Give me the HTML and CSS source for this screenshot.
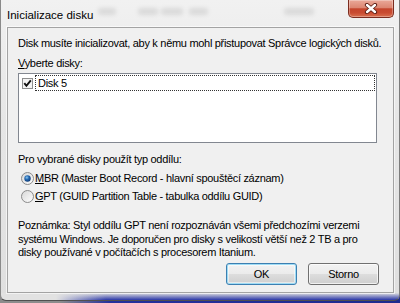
FILE: index.html
```html
<!DOCTYPE html>
<html lang="cs">
<head>
    <meta charset="UTF-8">
    <meta name="viewport" content="width=device-width, initial-scale=1.0">
    <title>Inicializace disku</title>
    <link rel="stylesheet" href="styles.css">
</head>
<body>
    <div class="window">
        <div class="titlebar">
            <span class="title">Inicializace disku</span>
            <div class="backdrop">
                <span class="blob b1"></span>
                <span class="blob b2"></span>
                <span class="blob b3"></span>
                <span class="blob b4"></span>
                <span class="blob b5"></span>
            </div>
            <div class="close">
                <svg width="14" height="11" viewBox="0 0 14 11">
                    <path d="M3 2 L11 9 M11 2 L3 9" stroke="#5a1c12" stroke-width="4.2" stroke-linecap="round"/>
                    <path d="M3 2 L11 9 M11 2 L3 9" stroke="#fff" stroke-width="2.4" stroke-linecap="round"/>
                </svg>
            </div>
        </div>

        <div class="client">
            <p class="intro">Disk musíte inicializovat, aby k němu mohl přistupovat Správce logických disků.</p>
            <div class="pick-label"><u>V</u>yberte disky:</div>

            <div class="listbox">
                <div class="item">
                    <span class="check">
                        <svg width="11" height="11" viewBox="0 0 11 11">
                            <rect x="0.5" y="0.5" width="10" height="10" fill="#f4f4f4" stroke="#8e8f8f"/>
                            <path d="M2.3 5.2 L4.4 7.8 L8.8 2.3" fill="none" stroke="#111" stroke-width="1.9"/>
                        </svg>
                    </span>
                    <span class="item-text">Disk 5</span>
                </div>
            </div>

            <div class="group-label">Pro vybrané disky použít typ oddílu:</div>
            <div class="radio first">
                <svg width="13" height="13" viewBox="0 0 13 13">
                    <defs>
                        <radialGradient id="dot" cx="0.4" cy="0.35" r="0.7">
                            <stop offset="0" stop-color="#8cc8ee"/>
                            <stop offset="0.45" stop-color="#2569b3"/>
                            <stop offset="1" stop-color="#0b3670"/>
                        </radialGradient>
                        <linearGradient id="ring" x1="0" y1="0" x2="1" y2="1">
                            <stop offset="0" stop-color="#d6d6d6"/>
                            <stop offset="1" stop-color="#ffffff"/>
                        </linearGradient>
                    </defs>
                    <circle cx="6.5" cy="6.5" r="6" fill="url(#ring)" stroke="#8a8a8a"/>
                    <circle cx="6.5" cy="6.5" r="3.2" fill="url(#dot)"/>
                </svg>
                <span><u>M</u>BR (Master Boot Record - hlavní spouštěcí záznam)</span>
            </div>
            <div class="radio">
                <svg width="13" height="13" viewBox="0 0 13 13">
                    <circle cx="6.5" cy="6.5" r="6" fill="url(#ring)" stroke="#8a8a8a"/>
                </svg>
                <span><u>G</u>PT (GUID Partition Table - tabulka oddílu GUID)</span>
            </div>

            <p class="note">Poznámka: Styl oddílu GPT není rozpoznáván všemi předchozími verzemi<br>systému Windows. Je doporučen pro disky s velikostí větší než 2 TB a pro<br>disky používané v počítačích s procesorem Itanium.</p>

            <div class="buttons">
                <button class="btn default">OK</button>
                <button class="btn">Storno</button>
            </div>
        </div>
    </div>
</body>
</html>
```

FILE: styles.css
```css
body {
    margin: 0;
    width: 400px;
    height: 303px;
    overflow: hidden;
    background: linear-gradient(to right, #8c8c8c 0, #8c8c8c 60px, #25309c 110px, #1e2a8e 100%);
    font-family: "Liberation Sans", Arial, sans-serif;
    font-size: 11px;
    letter-spacing: -0.3px;
    color: #000;
}
.window {
    height: 301px;
    box-sizing: border-box;
    border-left: 1px solid #8a8a8a;
    border-right: 1px solid #7c7c7c;
    border-bottom: 1px solid #505050;
    border-radius: 0 0 6px 6px;
    padding: 0 5px 7px 6px;
    display: flex;
    flex-direction: column;
    background:
        linear-gradient(to right, #e2e2e2 0, #e2e2e2 55px, rgba(226,226,226,0) 105px) 0 100% / 100% 7px no-repeat,
        linear-gradient(to bottom, rgba(42,54,168,0) 0, #2a36a8 100%) 0 100% / 100% 7px no-repeat,
        linear-gradient(#f1f1f1, #e6e6e6 40%, #dfdfdf);
}
.titlebar {
    height: 27px;
    display: flex;
    align-items: flex-start;
}
.title {
    margin-top: 8px;
    font-size: 11.5px;
    letter-spacing: 0;
    line-height: 15px;
    color: #000;
}
.backdrop {
    flex: 1;
    display: flex;
    margin-top: 8px;
}
.blob {
    height: 7px;
    border-radius: 3px;
    background: rgba(0,0,0,0.09);
    filter: blur(2px);
}
.b1 { margin-left: 5px; width: 18px; }
.b2 { margin-left: 22px; width: 20px; }
.b3 { margin-left: 3px; width: 22px; }
.b4 { margin-left: 6px; width: 19px; }
.b5 { margin-left: 76px; width: 30px; }
.close {
    width: 46px;
    height: 18px;
    box-sizing: border-box;
    border: 1px solid #7b2c1f;
    border-top: none;
    border-radius: 0 0 5px 5px;
    background: linear-gradient(#eaa999 0%, #dc8672 45%, #c4452c 52%, #c94b31 75%, #d9704f 100%);
    box-shadow: inset 0 0 0 1px rgba(255,255,255,0.3);
    display: flex;
    justify-content: center;
    align-items: center;
}
.client {
    flex: 1;
    border: 1px solid #a3a3a3;
    box-shadow: 0 0 0 1px rgba(255,255,255,0.6);
    background: #f0f0f0;
    padding: 8px 16px 0 10px;
}
.intro {
    margin: 0;
    line-height: 15px;
    white-space: nowrap;
}
.pick-label {
    margin-top: 5px;
    line-height: 15px;
}
.listbox {
    margin-top: 2px;
    height: 70px;
    box-sizing: border-box;
    border: 1px solid #828790;
    background: #fff;
    padding: 1px;
}
.item {
    display: flex;
    align-items: center;
    height: 16px;
}
.check {
    display: flex;
    margin-left: 2px;
}
.item-text {
    flex: 1;
    margin: 0 0 0 2px;
    height: 16px;
    box-sizing: border-box;
    border: 1px dotted #333;
    padding-left: 2px;
    line-height: 14px;
}
.group-label {
    margin-top: 9px;
    line-height: 15px;
}
.radio {
    display: flex;
    align-items: center;
    gap: 1px;
    margin-top: 3px;
    padding-left: 3px;
    line-height: 15px;
}
.radio.first {
    margin-top: 4px;
}
.note {
    margin: 15px 0 0;
    line-height: 13.5px;
    white-space: nowrap;
}
.buttons {
    margin-top: 3.5px;
    margin-right: -2px;
    display: flex;
    justify-content: flex-end;
    gap: 11px;
}
.btn {
    width: 71px;
    height: 22px;
    border: 1px solid #707070;
    border-radius: 3px;
    background: linear-gradient(#f2f2f2 0%, #ebebeb 49%, #dddddd 50%, #cfcfcf 100%);
    box-shadow: inset 0 0 0 1px rgba(255,255,255,0.7);
    font-family: "Liberation Sans", Arial, sans-serif;
    font-size: 11px;
    letter-spacing: -0.3px;
    color: #000;
    padding: 0;
}
.btn.default {
    border-color: #3c7fb1;
    box-shadow: inset 0 0 0 1px #9fdcf5, inset 0 0 0 2px rgba(255,255,255,0.5);
}
```
